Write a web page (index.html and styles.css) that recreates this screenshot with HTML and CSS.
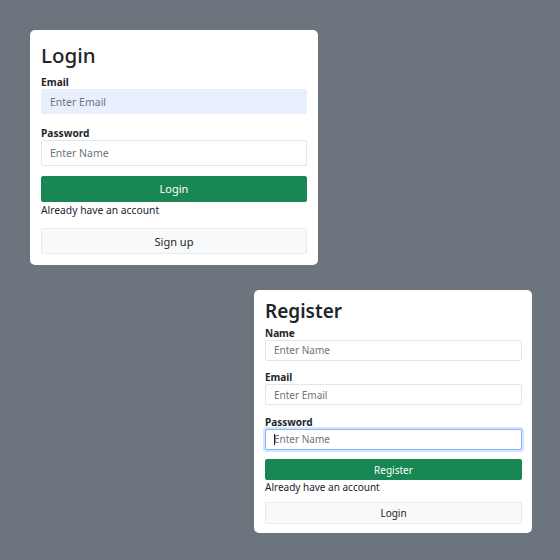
FILE: index.html
```html
<!DOCTYPE html>
<html lang="en">
<head>
<meta charset="utf-8">
<title>Login / Register</title>
<link rel="stylesheet" href="styles.css">
</head>
<body>
<div class="page">
  <form class="card card-login">
    <h2 class="title">Login</h2>
    <label class="label" for="l-email">Email</label>
    <input class="input input-autofill" id="l-email" type="text" placeholder="Enter Email">
    <label class="label label-gap" for="l-pass">Password</label>
    <input class="input" id="l-pass" type="text" placeholder="Enter Name">
    <button type="button" class="btn btn-success">Login</button>
    <p class="note">Already have an account</p>
    <button type="button" class="btn btn-light">Sign up</button>
  </form>

  <form class="card card-register">
    <h2 class="title">Register</h2>
    <label class="label" for="r-name">Name</label>
    <input class="input" id="r-name" type="text" placeholder="Enter Name">
    <label class="label label-gap" for="r-email">Email</label>
    <input class="input" id="r-email" type="text" placeholder="Enter Email">
    <label class="label label-gap" for="r-pass">Password</label>
    <div class="field-wrap">
      <input class="input input-focus" id="r-pass" type="text" placeholder="Enter Name">
      <span class="caret"></span>
    </div>
    <button type="button" class="btn btn-success">Register</button>
    <p class="note">Already have an account</p>
    <button type="button" class="btn btn-light">Login</button>
  </form>
</div>
</body>
</html>
```
FILE: styles.css
```css
* { box-sizing: border-box; }

html, body {
  margin: 0;
  padding: 0;
  background: #6c757d;
}

body {
  font-family: "Noto Sans", "Open Sans", sans-serif;
  color: #212529;
}

.page {
  width: 560px;
  height: 560px;
  padding: 30px 28px 0 30px;
  display: flex;
  flex-direction: column;
}

.card {
  background: #fff;
  border-radius: 5px;
  display: flex;
  flex-direction: column;
}

.title {
  margin: 0;
  font-weight: 500;
  line-height: 1.2;
}

.label {
  display: block;
  font-weight: 700;
}

.input {
  display: block;
  width: 100%;
  margin: 0;
  border: 1px solid #e3e6ea;
  border-radius: 2px;
  background: #fff;
  color: #212529;
  font-family: inherit;
  outline: none;
}

.input::placeholder {
  color: #6c757d;
  opacity: 1;
}

.input-autofill {
  background: #e8f0fe;
  border-color: #e8f0fe;
}

.input-focus {
  border-color: #86b7fe;
  box-shadow: 0 0 0 2px rgba(13, 110, 253, 0.18);
}

.field-wrap {
  position: relative;
}

.caret {
  position: absolute;
  left: 9px;
  top: 5px;
  width: 1px;
  height: 11px;
  background: #212529;
}

.btn {
  display: block;
  width: 100%;
  border-radius: 2px;
  font-family: inherit;
  cursor: pointer;
  padding: 0;
}

.btn-success {
  background: #198754;
  border: 1px solid #198754;
  color: #fff;
}

.btn-light {
  background: #f8f9fa;
  border: 1px solid #e9ecef;
  color: #212529;
}

.note {
  margin: 0;
}

/* Login card */
.card-login {
  align-self: flex-start;
  width: 288px;
  height: 235px;
  padding: 13px 11px 11px 11px;
}

.card-login .title {
  font-size: 20.5px;
  margin-bottom: 7px;
}

.card-login .label {
  font-size: 10.2px;
  line-height: 14px;
}

.card-login .label-gap {
  margin-top: 11.5px;
}

.card-login .input {
  height: 26px;
  padding: 0 8px;
  font-size: 10.5px;
}

.card-login .btn {
  height: 26px;
  font-size: 11px;
}

.card-login .btn-success {
  margin-top: 10px;
}

.card-login .note {
  font-size: 10.3px;
  line-height: 16px;
  margin-bottom: 10.5px;
}

/* Register card */
.card-register {
  align-self: flex-end;
  width: 278px;
  height: 243px;
  margin-top: 25px;
  padding: 10px 10px 9px 11px;
}

.card-register .title {
  font-size: 19px;
  font-weight: 600;
  margin-bottom: 4px;
}

.card-register .label {
  font-size: 10px;
  line-height: 13px;
}

.card-register .label-gap {
  margin-top: 10.5px;
}

.card-register .input {
  height: 21px;
  padding: 0 8px;
  font-size: 10px;
}

.card-register .btn {
  height: 21.5px;
  font-size: 10px;
}

.card-register .btn-success {
  margin-top: 9px;
}

.card-register .note {
  font-size: 10px;
  line-height: 14px;
  margin-bottom: 8px;
}
```
